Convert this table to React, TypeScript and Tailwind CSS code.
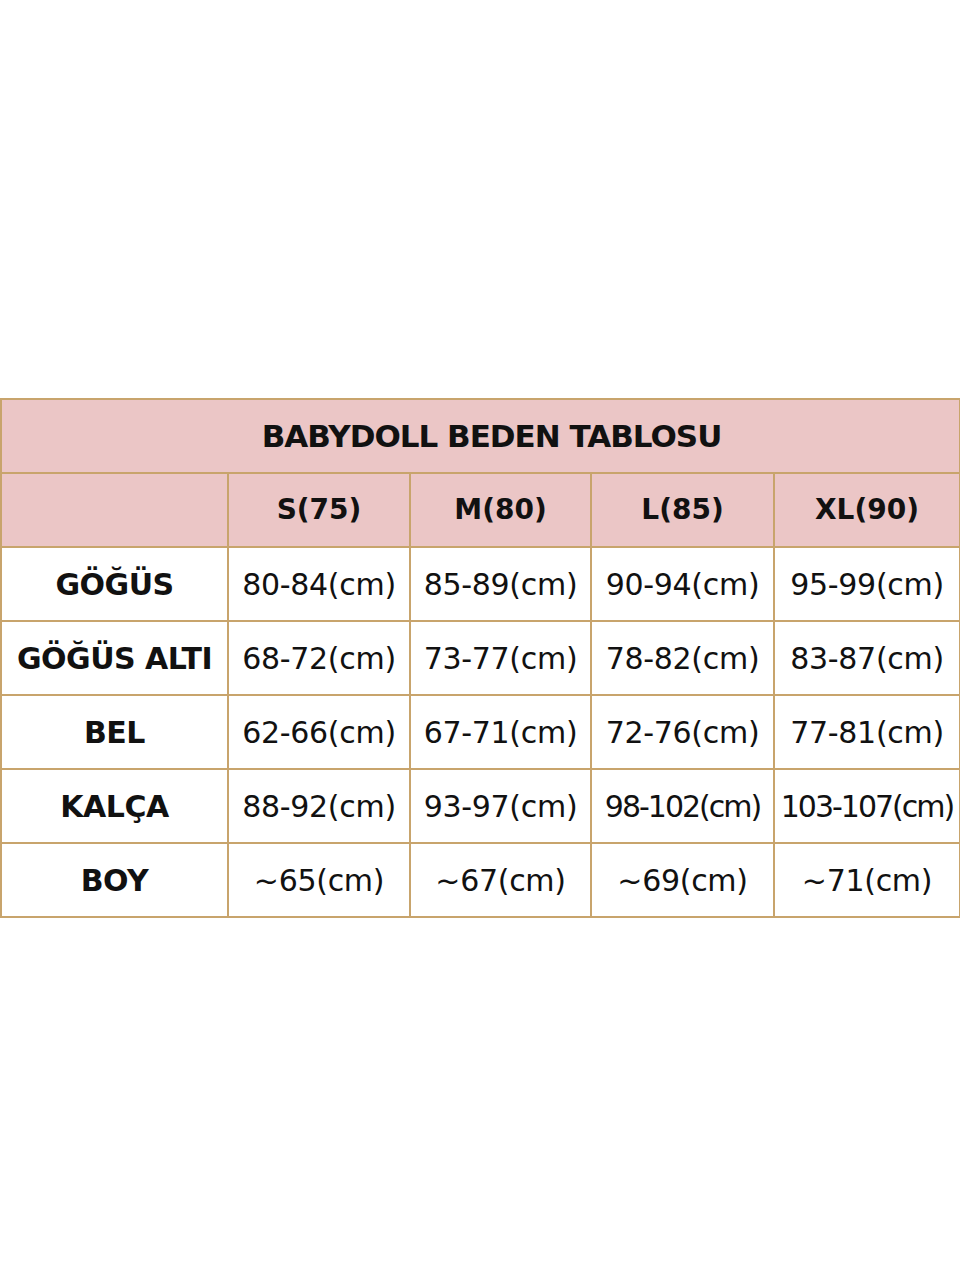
const sizes = ['S(75)', 'M(80)', 'L(85)', 'XL(90)'];

const rows: [string, string[]][] = [
  ['GÖĞÜS', ['80-84(cm)', '85-89(cm)', '90-94(cm)', '95-99(cm)']],
  ['GÖĞÜS ALTI', ['68-72(cm)', '73-77(cm)', '78-82(cm)', '83-87(cm)']],
  ['BEL', ['62-66(cm)', '67-71(cm)', '72-76(cm)', '77-81(cm)']],
  ['KALÇA', ['88-92(cm)', '93-97(cm)', '98-102(cm)', '103-107(cm)']],
  ['BOY', ['~65(cm)', '~67(cm)', '~69(cm)', '~71(cm)']],
];

const cell = 'border-2 border-[#c8a46c] h-[74px] p-0 text-center align-middle whitespace-nowrap';

export default function App() {
  return (
    <div className="min-h-screen bg-white pt-[398px] font-['DejaVu_Sans',sans-serif] text-[#111]">
      <table className="w-[959px] table-fixed border-collapse">
        <colgroup>
          <col className="w-[227px]" />
          <col className="w-[182px]" />
          <col className="w-[181px]" />
          <col className="w-[183px]" />
          <col className="w-[186px]" />
        </colgroup>
        <thead>
          <tr className="bg-[#ebc6c6]">
            <th colSpan={5} className={`${cell} pl-[22px] text-[31px] font-bold tracking-[-1px]`}>
              BABYDOLL BEDEN TABLOSU
            </th>
          </tr>
          <tr className="bg-[#ebc6c6]">
            <th className={cell}></th>
            {sizes.map((s) => (
              <th key={s} className={`${cell} text-[28px] font-bold`}>
                {s}
              </th>
            ))}
          </tr>
        </thead>
        <tbody>
          {rows.map(([label, vals]) => (
            <tr key={label}>
              <td className={`${cell} text-[30px] font-bold tracking-[-0.5px]`}>{label}</td>
              {vals.map((v) => (
                <td
                  key={v}
                  className={`${cell} text-[30px] ${v.length > 9 ? 'tracking-[-2px]' : 'tracking-[-0.3px]'}`}
                >
                  {v}
                </td>
              ))}
            </tr>
          ))}
        </tbody>
      </table>
    </div>
  );
}
